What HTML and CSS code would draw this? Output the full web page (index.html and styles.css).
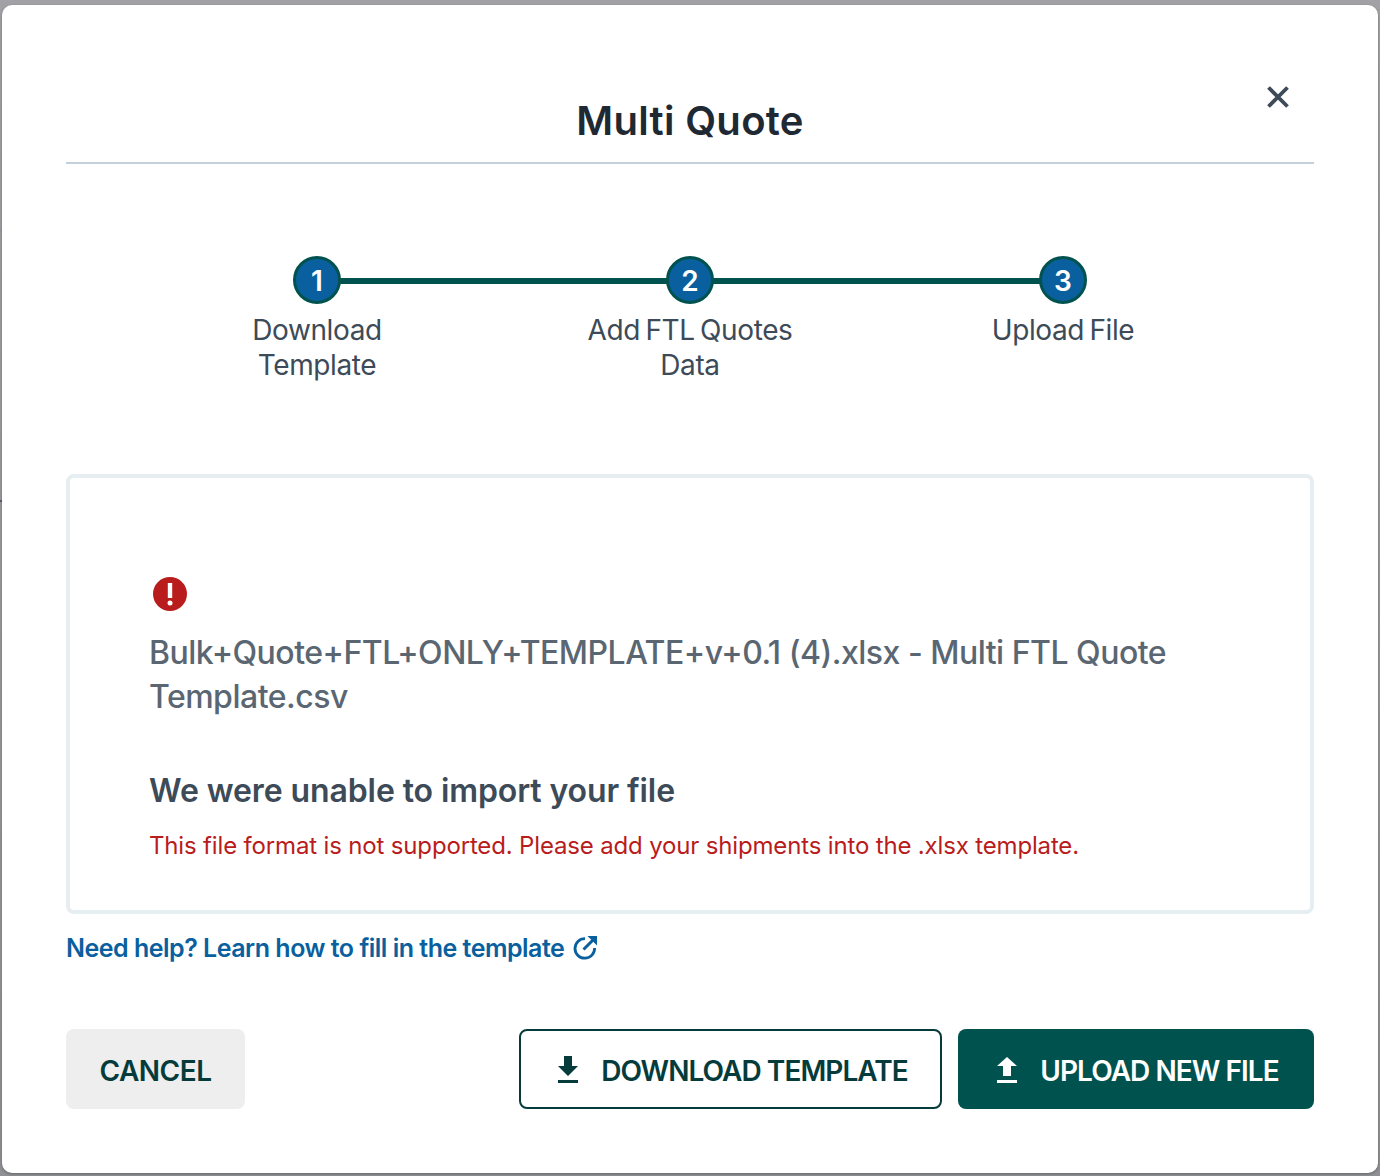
FILE: index.html
```html
<!DOCTYPE html>
<html lang="en">
<head>
<meta charset="utf-8">
<title>Multi Quote</title>
<link rel="stylesheet" href="styles.css">
</head>
<body>
<div class="backdrop">
  <div class="stripe stripe-a"></div>
  <div class="stripe stripe-b"></div>
  <main class="modal">
    <button class="close" aria-label="Close">
      <svg width="24" height="24" viewBox="0 0 24 24"><path d="M2.5 2.5 21.5 21.5M21.5 2.5 2.5 21.5" fill="none" stroke="#3d4a58" stroke-width="3.8"/></svg>
    </button>
    <header class="head"><h1 class="title">Multi Quote</h1></header>
    <ol class="steps">
      <li class="step"><span class="dot">1</span><span class="step-label">Download<br>Template</span></li>
      <li class="step"><span class="dot">2</span><span class="step-label">Add FTL Quotes<br>Data</span></li>
      <li class="step"><span class="dot">3</span><span class="step-label">Upload File</span></li>
    </ol>
    <section class="panel">
      <svg class="err" width="34" height="34" viewBox="0 0 34 34"><circle cx="17" cy="17" r="17" fill="#b91c1c"/><rect x="14.8" y="6" width="4.4" height="15" fill="#fff"/><circle cx="17" cy="26" r="2.5" fill="#fff"/></svg>
      <p class="file">Bulk+Quote+FTL+ONLY+TEMPLATE+v+0.1 (4).xlsx - Multi FTL Quote Template.csv</p>
      <h2 class="fail">We were unable to import your file</h2>
      <p class="why">This file format is not supported. Please add your shipments into the .xlsx template.</p>
    </section>
    <a class="help" href="#">Need help? Learn how to fill in the template
      <svg width="26" height="26" viewBox="0 0 26 26"><path d="M13 3.6A9.8 9.8 0 1 0 22.6 13" fill="none" stroke="#0a5f9e" stroke-width="2.8"/><path d="M11.5 14.5 21 5" fill="none" stroke="#0a5f9e" stroke-width="3"/><path d="M15.5 1H25V10.5Z" fill="#0a5f9e"/></svg>
    </a>
    <footer class="actions">
      <button class="btn cancel"><span class="btn-text">CANCEL</span></button>
      <div class="right">
        <button class="btn outline">
          <svg width="20" height="27" viewBox="0 0 20 27"><path d="M6 0h8v10h6L10 20 0 10h6Z" fill="#063b3c"/><rect x="0" y="24" width="20" height="3" fill="#063b3c"/></svg>
          <span class="btn-text">DOWNLOAD TEMPLATE</span>
        </button>
        <button class="btn solid">
          <svg width="20" height="27" viewBox="0 0 20 27"><path d="M6 20h8V10h6L10 1 0 10h6Z" fill="#fff"/><rect x="0" y="24" width="20" height="3" fill="#fff"/></svg>
          <span class="btn-text">UPLOAD NEW FILE</span>
        </button>
      </div>
    </footer>
  </main>
</div>
</body>
</html>
```
FILE: styles.css
```css
* { box-sizing: border-box; }
html, body { margin: 0; height: 100%; }
body { font-family: Inter, "Noto Sans", "Liberation Sans", sans-serif; color: #3d4a58; background: #98989c; }
.backdrop { position: relative; width: 1380px; height: 1176px; padding: 5px 2px 3px; background: linear-gradient(#a2a2a6, #8e9094); overflow: hidden; }
.stripe { position: absolute; left: 0; width: 2px; }
.stripe-a { top: 500px; height: 2px; background: #5a6068; }
.stripe-b { top: 230px; height: 1px; background: #909499; }
.modal { position: relative; width: 1376px; height: 1168px; background: #fff; border-radius: 10px; padding: 0 64px; display: flex; flex-direction: column; box-shadow: 0 1px 3px rgba(0,0,0,.3); }
.close { position: absolute; top: 80px; right: 88px; width: 24px; height: 24px; padding: 0; border: 0; background: none; display: flex; }
.head { height: 159px; border-bottom: 2px solid #c2d1db; display: flex; justify-content: center; padding-top: 92px; }
.title { margin: 0; font-size: 40px; line-height: 48px; font-weight: 600; color: #1f2933; letter-spacing: 0.3px; }
.steps { list-style: none; margin: 92px 0 0; padding: 0; display: flex; justify-content: center; height: 218px; }
.step { position: relative; width: 373px; display: flex; flex-direction: column; align-items: center; }
.step:not(:last-child)::after { content: ""; position: absolute; top: 22px; left: 50%; width: 100%; height: 6px; background: #00524f; }
.dot { position: relative; z-index: 1; width: 48px; height: 48px; border-radius: 50%; background: #0a5f9e; border: 3px solid #00524f; color: #fff; font-size: 28px; font-weight: 600; display: flex; align-items: center; justify-content: center; padding-top: 1px; }
.step-label { margin-top: 9px; font-size: 28px; line-height: 35px; text-align: center; color: #3d4a58; letter-spacing: -0.4px; word-spacing: -2px; }
.panel { height: 440px; border: 4px solid #e6eef1; border-radius: 8px; padding: 99px 80px 0 79px; }
.err { display: block; margin-left: 4px; }
.file { margin: 20px 0 0; font-size: 32px; line-height: 44px; font-weight: 500; color: #5a6672; letter-spacing: -0.5px; }
.fail { margin: 52px 0 0; font-size: 32px; line-height: 40px; font-weight: 600; color: #3d4a58; letter-spacing: -0.1px; }
.why { margin: 19px 0 0; font-size: 24px; line-height: 32px; color: #b91c1c; letter-spacing: -0.16px; }
.help { margin-top: 19px; display: flex; align-items: center; gap: 8px; font-size: 25px; line-height: 30px; font-weight: 600; color: #0a5f9e; text-decoration: none; letter-spacing: -0.5px; }
.actions { margin-top: 66px; display: flex; justify-content: space-between; }
.right { display: flex; gap: 16px; }
.btn { height: 80px; border-radius: 8px; font: inherit; font-size: 28px; font-weight: 600; display: flex; align-items: center; justify-content: center; gap: 23px; padding: 0; }
.btn-text { padding-top: 3px; letter-spacing: -0.95px; }
.cancel { width: 179px; background: #eeeeee; border: 0; color: #063b3c; }
.cancel .btn-text { letter-spacing: -0.5px; }
.outline { width: 423px; background: #fff; border: 2px solid #063b3c; color: #063b3c; padding-left: 5px; }
.solid { width: 356px; background: #00524f; border: 0; color: #fff; padding-left: 4px; }
```
